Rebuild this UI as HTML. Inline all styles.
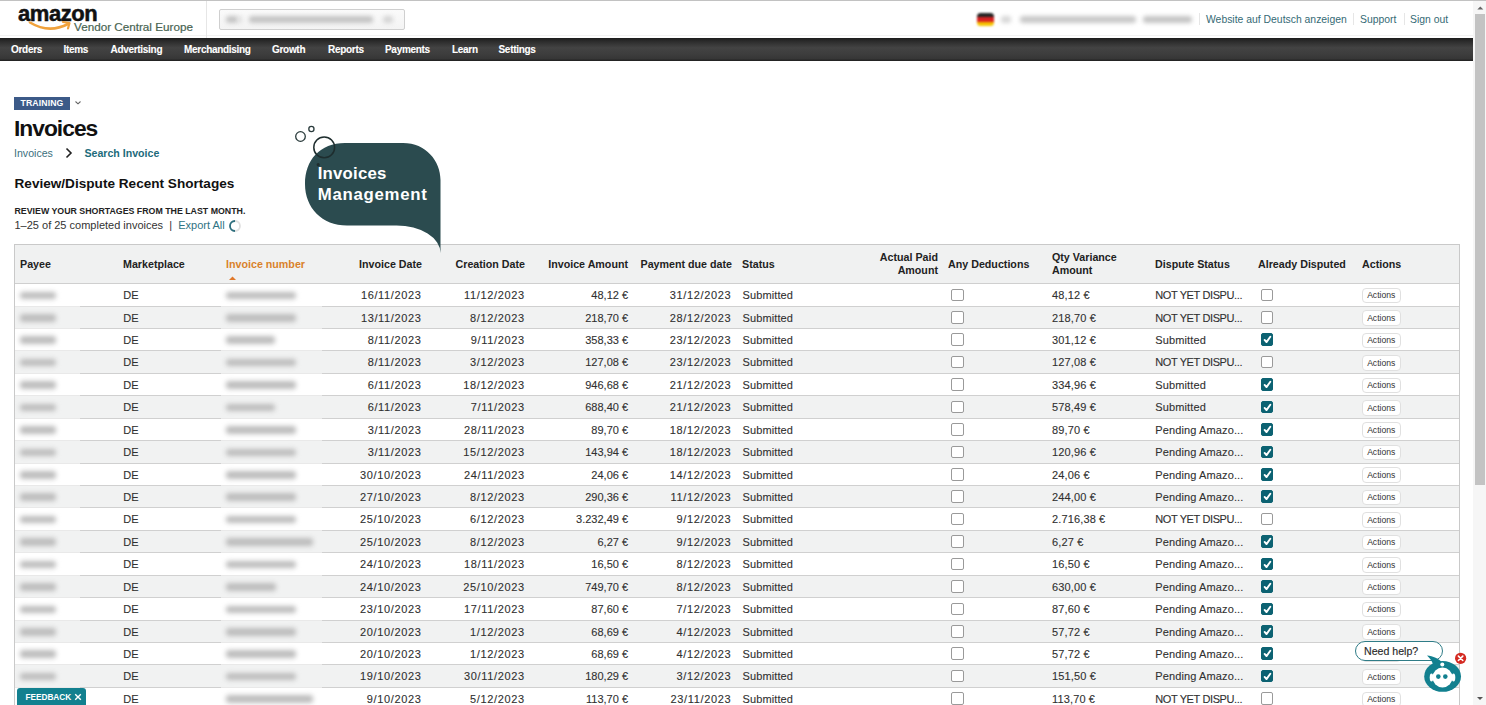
<!DOCTYPE html>
<html><head><meta charset="utf-8"><style>
*{box-sizing:border-box;margin:0;padding:0}
html,body{width:1486px;height:705px;overflow:hidden;background:#fff;font-family:"Liberation Sans",sans-serif;color:#333}
.abs{position:absolute}
#topline{position:absolute;left:0;top:0;width:1486px;height:1px;background:#c2c2c2;z-index:5}
#logo{position:absolute;left:18px;top:0.8px;font-weight:bold;font-size:22px;color:#111;letter-spacing:-0.45px;-webkit-text-stroke:0.5px #111}
#vce{position:absolute;left:74px;top:20px;font-size:11.7px;color:#486452;-webkit-text-stroke:0.2px #486452;white-space:nowrap}
#sep1{position:absolute;left:206px;top:1px;width:1px;height:37px;background:#e6e6e6}
#search{position:absolute;left:219px;top:9px;width:186px;height:20.5px;border:1px solid #cfcfcf;border-radius:2px;background:linear-gradient(#fafafa,#f4f4f4)}
.bt{position:absolute;height:7px;border-radius:3px;background:#c4c4c4;filter:blur(2.3px)}
#nav{position:absolute;left:0;top:38px;width:1473px;height:23px;background:linear-gradient(#1c1c1c 0%,#2c2c2c 15%,#434343 42%,#3d3d3d 70%,#363636 90%,#1e1e1e 100%);}
#nav span{position:absolute;top:6.3px;color:#fff;-webkit-text-stroke:0.1px #fff;font-weight:bold;font-size:10px;letter-spacing:-0.3px;white-space:nowrap}
#links{position:absolute;top:13.5px;font-size:10.4px;color:#356a75;white-space:nowrap}
.vsep{position:absolute;top:13px;width:1px;height:12px;background:#e6e6e6}
#flag{position:absolute;left:977px;top:12.5px;width:16.5px;height:13.5px;border-radius:3.5px;overflow:hidden;filter:blur(0.9px)}
#flag i{display:block;height:4.5px}
#scroll{position:absolute;left:1473px;top:1px;width:13px;height:704px;background:#f6f6f6}
#thumb{position:absolute;left:1475px;top:14px;width:10px;height:471px;background:#c3c3c3}
#train{position:absolute;left:14px;top:97px;width:56px;height:13.4px;background:#3c5a88;color:#fff;font-weight:bold;font-size:8.7px;line-height:13.6px;text-align:center;letter-spacing:0.1px}
#h1{position:absolute;left:14px;top:115px;font-weight:bold;font-size:22.8px;color:#111;letter-spacing:-1.0px}
#bc1{position:absolute;left:14px;top:147.2px;font-size:10.6px;color:#3b6f7d}
#bc2{position:absolute;left:84.5px;top:147.2px;font-size:10.6px;color:#1d6b7b;font-weight:bold}
#h2{position:absolute;left:14.5px;top:175.5px;font-weight:bold;font-size:13.6px;color:#111}
#h3{position:absolute;left:14.5px;top:205.8px;font-weight:bold;font-size:8.8px;color:#222}
#cnt{position:absolute;left:14.5px;top:219px;font-size:11px;color:#333;white-space:nowrap}
#cnt a{color:#2f7383;text-decoration:none}
#tbl{position:absolute;left:14px;top:244px;width:1446px;height:470px;border:1px solid #c9c9c9;background:#fff}
#thead{position:absolute;left:15px;top:245px;width:1444px;height:39px;background:#f0f1f1;border-bottom:1px solid #cfcfcf}
.th{position:absolute;font-weight:bold;font-size:10.7px;color:#222;white-space:nowrap;line-height:13px}
.row{position:absolute;left:15px;width:1444px;height:22.43px;border-bottom:1px solid #d0d0d0}
.row .t{position:absolute;top:5px;font-size:11px;color:#303030;-webkit-text-stroke:0.1px #303030;white-space:nowrap;line-height:13px}
.row .r{width:98px;text-align:right}
.row .l{letter-spacing:0.12px}
.row .dt{letter-spacing:0.65px}
.row .blur{position:absolute;top:7.5px;height:7.5px;background:#bcbcbc;border-radius:3px;filter:blur(2.4px)}
.cb{position:absolute;top:4.5px;width:12.5px;height:12.5px;border:1px solid #9a9a9a;border-radius:2px;background:#fff}
.cb.on{background:#0c6272;border-color:#0c6272}
.cb svg{position:absolute;left:-1px;top:-1px}
.act{position:absolute;top:3.8px;width:39px;height:15.5px;border:1px solid #e0e0e0;padding-top:0.5px;border-radius:4px;background:#fff;font-size:8.6px;line-height:13px;text-align:center;color:#333}
.row .nyd{letter-spacing:-0.38px}
.cov{position:absolute;bottom:-1px;height:1px;background:#e9e9e9}
#hdrline{position:absolute;left:0;top:35px;width:1474px;height:1px;background:#f2f2f2}

</style></head><body>
<div id="topline"></div>
<div id="logo">amazon</div>
<svg class="abs" style="left:27px;top:18px" width="48" height="16" viewBox="0 0 48 16"><path d="M3 4.5 Q22 16 41 6" fill="none" stroke="#f0a23c" stroke-width="2.6" stroke-linecap="round"/><path d="M36 4 L42.5 5 L41 10.5" fill="none" stroke="#f0a23c" stroke-width="2.2" stroke-linecap="round" stroke-linejoin="round"/></svg>
<div id="vce">Vendor Central Europe</div>
<div id="hdrline"></div><div id="sep1"></div>
<div id="search"><div class="bt" style="left:6px;top:5.5px;width:12px"></div><div class="bt" style="left:18px;top:5.5px;width:4px;background:#ddd"></div><div class="bt" style="left:29px;top:5.5px;width:124px"></div><div class="bt" style="left:163px;top:5.5px;width:10px;background:#d4d4d4"></div></div>
<div id="flag"><i style="background:#222"></i><i style="background:#d82020"></i><i style="background:#f5c400"></i></div>
<div class="bt" style="left:1001px;top:16px;width:10px;background:#d6d6d6"></div>
<div class="bt" style="left:1020px;top:16px;width:116px;background:#c8c8c8"></div>
<div class="bt" style="left:1143px;top:16px;width:49px;background:#c4c4c4"></div>
<div class="vsep" style="left:1199px"></div>
<div id="links" style="left:1206px">Website auf Deutsch anzeigen</div>
<div class="vsep" style="left:1353px"></div>
<div id="links" style="left:1360px">Support</div>
<div class="vsep" style="left:1404px"></div>
<div id="links" style="left:1410px">Sign out</div>
<div id="nav">
<span style="left:11px">Orders</span>
<span style="left:63.5px">Items</span>
<span style="left:110.5px">Advertising</span>
<span style="left:184px">Merchandising</span>
<span style="left:272px">Growth</span>
<span style="left:328px">Reports</span>
<span style="left:385px">Payments</span>
<span style="left:452px">Learn</span>
<span style="left:498.5px">Settings</span>
</div>
<div id="scroll"></div><div id="thumb"></div>
<svg class="abs" style="left:1474px;top:2px" width="12" height="12"><path d="M3.3 7.5 L6.3 4.5 L9.3 7.5Z" fill="#666"/></svg>
<svg class="abs" style="left:1474px;top:692px" width="12" height="12"><path d="M3 5 L6 8 L9 5Z" fill="#555"/></svg>

<div id="train">TRAINING</div>
<svg class="abs" style="left:74px;top:100px" width="8" height="6"><path d="M1.5 1.5 L4 3.8 L6.5 1.5" fill="none" stroke="#666" stroke-width="1.1"/></svg>
<div id="h1">Invoices</div>
<div id="bc1">Invoices</div>
<svg class="abs" style="left:64px;top:147px" width="10" height="12"><path d="M2.5 1.5 L7 6 L2.5 10.5" fill="none" stroke="#222" stroke-width="1.6"/></svg>
<div id="bc2">Search Invoice</div>
<div id="h2">Review/Dispute Recent Shortages</div>
<div id="h3">REVIEW YOUR SHORTAGES FROM THE LAST MONTH.</div>
<div id="cnt">1–25 of 25 completed invoices &nbsp;|&nbsp; <a>Export All</a></div>
<svg class="abs" style="left:228px;top:219px" width="14" height="14"><circle cx="7" cy="7" r="5" fill="none" stroke="#e0e0e0" stroke-width="1.8"/><path d="M7 2 A5 5 0 0 0 7 12" fill="none" stroke="#2d6f7e" stroke-width="1.8"/></svg>

<div id="tbl"></div>
<div id="thead">
</div>
<div class="th" style="left:20px;top:258px">Payee</div>
<div class="th" style="left:123px;top:258px">Marketplace</div>
<div class="th" style="left:226px;top:258px;color:#d9822b">Invoice number</div>
<svg class="abs" style="left:228px;top:275px" width="9" height="6"><path d="M1 5 L4.5 1.5 L8 5Z" fill="#e0782a"/></svg>
<div class="th" style="left:323px;top:258px;width:99px;text-align:right">Invoice Date</div>
<div class="th" style="left:427px;top:258px;width:98px;text-align:right">Creation Date</div>
<div class="th" style="left:530px;top:258px;width:98px;text-align:right">Invoice Amount</div>
<div class="th" style="left:633px;top:258px;width:99px;text-align:right">Payment due date</div>
<div class="th" style="left:742px;top:258px">Status</div>
<div class="th" style="left:840px;top:251px;width:98px;text-align:right">Actual Paid<br>Amount</div>
<div class="th" style="left:948px;top:258px">Any Deductions</div>
<div class="th" style="left:1052px;top:251px">Qty Variance<br>Amount</div>
<div class="th" style="left:1155px;top:258px">Dispute Status</div>
<div class="th" style="left:1258px;top:258px">Already Disputed</div>
<div class="th" style="left:1362px;top:258px">Actions</div>
<div class="row" style="top:284.10px;background:#fff"><div class="blur" style="left:5.00px;width:36px"></div><div class="t l" style="left:108.21px">DE</div><div class="blur" style="left:211.42px;width:69.5px"></div><div class="t r dt" style="left:308.63px">16/11/2023</div><div class="t r dt" style="left:411.84px">11/12/2023</div><div class="t r" style="left:515.05px">48,12 €</div><div class="t r dt" style="left:618.26px">31/12/2023</div><div class="t l" style="left:727.47px">Submitted</div><div class="cb" style="left:936.09px"></div><div class="t l" style="left:1037.10px">48,12 €</div><div class="t l nyd" style="left:1140.31px">NOT YET DISPU...</div><div class="cb" style="left:1245.52px"></div><div class="cov" style="left:0;width:65px"></div><div class="cov" style="left:206px;width:101px"></div><div class="act" style="left:1346.73px">Actions</div></div>
<div class="row" style="top:306.53px;background:#f1f2f2"><div class="blur" style="left:5.00px;width:36px"></div><div class="t l" style="left:108.21px">DE</div><div class="blur" style="left:211.42px;width:69.5px"></div><div class="t r dt" style="left:308.63px">13/11/2023</div><div class="t r dt" style="left:411.84px">8/12/2023</div><div class="t r" style="left:515.05px">218,70 €</div><div class="t r dt" style="left:618.26px">28/12/2023</div><div class="t l" style="left:727.47px">Submitted</div><div class="cb" style="left:936.09px"></div><div class="t l" style="left:1037.10px">218,70 €</div><div class="t l nyd" style="left:1140.31px">NOT YET DISPU...</div><div class="cb" style="left:1245.52px"></div><div class="cov" style="left:0;width:65px"></div><div class="cov" style="left:206px;width:101px"></div><div class="act" style="left:1346.73px">Actions</div></div>
<div class="row" style="top:328.96px;background:#fff"><div class="blur" style="left:5.00px;width:36px"></div><div class="t l" style="left:108.21px">DE</div><div class="blur" style="left:211.42px;width:48.5px"></div><div class="t r dt" style="left:308.63px">8/11/2023</div><div class="t r dt" style="left:411.84px">9/11/2023</div><div class="t r" style="left:515.05px">358,33 €</div><div class="t r dt" style="left:618.26px">23/12/2023</div><div class="t l" style="left:727.47px">Submitted</div><div class="cb" style="left:936.09px"></div><div class="t l" style="left:1037.10px">301,12 €</div><div class="t l" style="left:1140.31px">Submitted</div><div class="cb on" style="left:1245.52px"><svg width="13" height="13" viewBox="0 0 13 13"><path d="M3.6 6.9 L5.5 9.1 L9.3 3.8" fill="none" stroke="#fff" stroke-width="1.9" stroke-linecap="round" stroke-linejoin="round"/></svg></div><div class="cov" style="left:0;width:65px"></div><div class="cov" style="left:206px;width:101px"></div><div class="act" style="left:1346.73px">Actions</div></div>
<div class="row" style="top:351.39px;background:#f1f2f2"><div class="blur" style="left:5.00px;width:36px"></div><div class="t l" style="left:108.21px">DE</div><div class="blur" style="left:211.42px;width:69.5px"></div><div class="t r dt" style="left:308.63px">8/11/2023</div><div class="t r dt" style="left:411.84px">3/12/2023</div><div class="t r" style="left:515.05px">127,08 €</div><div class="t r dt" style="left:618.26px">23/12/2023</div><div class="t l" style="left:727.47px">Submitted</div><div class="cb" style="left:936.09px"></div><div class="t l" style="left:1037.10px">127,08 €</div><div class="t l nyd" style="left:1140.31px">NOT YET DISPU...</div><div class="cb" style="left:1245.52px"></div><div class="cov" style="left:0;width:65px"></div><div class="cov" style="left:206px;width:101px"></div><div class="act" style="left:1346.73px">Actions</div></div>
<div class="row" style="top:373.82px;background:#fff"><div class="blur" style="left:5.00px;width:36px"></div><div class="t l" style="left:108.21px">DE</div><div class="blur" style="left:211.42px;width:69.5px"></div><div class="t r dt" style="left:308.63px">6/11/2023</div><div class="t r dt" style="left:411.84px">18/12/2023</div><div class="t r" style="left:515.05px">946,68 €</div><div class="t r dt" style="left:618.26px">21/12/2023</div><div class="t l" style="left:727.47px">Submitted</div><div class="cb" style="left:936.09px"></div><div class="t l" style="left:1037.10px">334,96 €</div><div class="t l" style="left:1140.31px">Submitted</div><div class="cb on" style="left:1245.52px"><svg width="13" height="13" viewBox="0 0 13 13"><path d="M3.6 6.9 L5.5 9.1 L9.3 3.8" fill="none" stroke="#fff" stroke-width="1.9" stroke-linecap="round" stroke-linejoin="round"/></svg></div><div class="cov" style="left:0;width:65px"></div><div class="cov" style="left:206px;width:101px"></div><div class="act" style="left:1346.73px">Actions</div></div>
<div class="row" style="top:396.25px;background:#f1f2f2"><div class="blur" style="left:5.00px;width:36px"></div><div class="t l" style="left:108.21px">DE</div><div class="blur" style="left:211.42px;width:48.5px"></div><div class="t r dt" style="left:308.63px">6/11/2023</div><div class="t r dt" style="left:411.84px">7/11/2023</div><div class="t r" style="left:515.05px">688,40 €</div><div class="t r dt" style="left:618.26px">21/12/2023</div><div class="t l" style="left:727.47px">Submitted</div><div class="cb" style="left:936.09px"></div><div class="t l" style="left:1037.10px">578,49 €</div><div class="t l" style="left:1140.31px">Submitted</div><div class="cb on" style="left:1245.52px"><svg width="13" height="13" viewBox="0 0 13 13"><path d="M3.6 6.9 L5.5 9.1 L9.3 3.8" fill="none" stroke="#fff" stroke-width="1.9" stroke-linecap="round" stroke-linejoin="round"/></svg></div><div class="cov" style="left:0;width:65px"></div><div class="cov" style="left:206px;width:101px"></div><div class="act" style="left:1346.73px">Actions</div></div>
<div class="row" style="top:418.68px;background:#fff"><div class="blur" style="left:5.00px;width:36px"></div><div class="t l" style="left:108.21px">DE</div><div class="blur" style="left:211.42px;width:69.5px"></div><div class="t r dt" style="left:308.63px">3/11/2023</div><div class="t r dt" style="left:411.84px">28/11/2023</div><div class="t r" style="left:515.05px">89,70 €</div><div class="t r dt" style="left:618.26px">18/12/2023</div><div class="t l" style="left:727.47px">Submitted</div><div class="cb" style="left:936.09px"></div><div class="t l" style="left:1037.10px">89,70 €</div><div class="t l" style="left:1140.31px">Pending Amazo...</div><div class="cb on" style="left:1245.52px"><svg width="13" height="13" viewBox="0 0 13 13"><path d="M3.6 6.9 L5.5 9.1 L9.3 3.8" fill="none" stroke="#fff" stroke-width="1.9" stroke-linecap="round" stroke-linejoin="round"/></svg></div><div class="cov" style="left:0;width:65px"></div><div class="cov" style="left:206px;width:101px"></div><div class="act" style="left:1346.73px">Actions</div></div>
<div class="row" style="top:441.11px;background:#f1f2f2"><div class="blur" style="left:5.00px;width:36px"></div><div class="t l" style="left:108.21px">DE</div><div class="blur" style="left:211.42px;width:69.5px"></div><div class="t r dt" style="left:308.63px">3/11/2023</div><div class="t r dt" style="left:411.84px">15/12/2023</div><div class="t r" style="left:515.05px">143,94 €</div><div class="t r dt" style="left:618.26px">18/12/2023</div><div class="t l" style="left:727.47px">Submitted</div><div class="cb" style="left:936.09px"></div><div class="t l" style="left:1037.10px">120,96 €</div><div class="t l" style="left:1140.31px">Pending Amazo...</div><div class="cb on" style="left:1245.52px"><svg width="13" height="13" viewBox="0 0 13 13"><path d="M3.6 6.9 L5.5 9.1 L9.3 3.8" fill="none" stroke="#fff" stroke-width="1.9" stroke-linecap="round" stroke-linejoin="round"/></svg></div><div class="cov" style="left:0;width:65px"></div><div class="cov" style="left:206px;width:101px"></div><div class="act" style="left:1346.73px">Actions</div></div>
<div class="row" style="top:463.54px;background:#fff"><div class="blur" style="left:5.00px;width:36px"></div><div class="t l" style="left:108.21px">DE</div><div class="blur" style="left:211.42px;width:69.5px"></div><div class="t r dt" style="left:308.63px">30/10/2023</div><div class="t r dt" style="left:411.84px">24/11/2023</div><div class="t r" style="left:515.05px">24,06 €</div><div class="t r dt" style="left:618.26px">14/12/2023</div><div class="t l" style="left:727.47px">Submitted</div><div class="cb" style="left:936.09px"></div><div class="t l" style="left:1037.10px">24,06 €</div><div class="t l" style="left:1140.31px">Pending Amazo...</div><div class="cb on" style="left:1245.52px"><svg width="13" height="13" viewBox="0 0 13 13"><path d="M3.6 6.9 L5.5 9.1 L9.3 3.8" fill="none" stroke="#fff" stroke-width="1.9" stroke-linecap="round" stroke-linejoin="round"/></svg></div><div class="cov" style="left:0;width:65px"></div><div class="cov" style="left:206px;width:101px"></div><div class="act" style="left:1346.73px">Actions</div></div>
<div class="row" style="top:485.97px;background:#f1f2f2"><div class="blur" style="left:5.00px;width:36px"></div><div class="t l" style="left:108.21px">DE</div><div class="blur" style="left:211.42px;width:69.5px"></div><div class="t r dt" style="left:308.63px">27/10/2023</div><div class="t r dt" style="left:411.84px">8/12/2023</div><div class="t r" style="left:515.05px">290,36 €</div><div class="t r dt" style="left:618.26px">11/12/2023</div><div class="t l" style="left:727.47px">Submitted</div><div class="cb" style="left:936.09px"></div><div class="t l" style="left:1037.10px">244,00 €</div><div class="t l" style="left:1140.31px">Pending Amazo...</div><div class="cb on" style="left:1245.52px"><svg width="13" height="13" viewBox="0 0 13 13"><path d="M3.6 6.9 L5.5 9.1 L9.3 3.8" fill="none" stroke="#fff" stroke-width="1.9" stroke-linecap="round" stroke-linejoin="round"/></svg></div><div class="cov" style="left:0;width:65px"></div><div class="cov" style="left:206px;width:101px"></div><div class="act" style="left:1346.73px">Actions</div></div>
<div class="row" style="top:508.40px;background:#fff"><div class="blur" style="left:5.00px;width:36px"></div><div class="t l" style="left:108.21px">DE</div><div class="blur" style="left:211.42px;width:69.5px"></div><div class="t r dt" style="left:308.63px">25/10/2023</div><div class="t r dt" style="left:411.84px">6/12/2023</div><div class="t r" style="left:515.05px">3.232,49 €</div><div class="t r dt" style="left:618.26px">9/12/2023</div><div class="t l" style="left:727.47px">Submitted</div><div class="cb" style="left:936.09px"></div><div class="t l" style="left:1037.10px">2.716,38 €</div><div class="t l nyd" style="left:1140.31px">NOT YET DISPU...</div><div class="cb" style="left:1245.52px"></div><div class="cov" style="left:0;width:65px"></div><div class="cov" style="left:206px;width:101px"></div><div class="act" style="left:1346.73px">Actions</div></div>
<div class="row" style="top:530.83px;background:#f1f2f2"><div class="blur" style="left:5.00px;width:36px"></div><div class="t l" style="left:108.21px">DE</div><div class="blur" style="left:211.42px;width:86.5px"></div><div class="t r dt" style="left:308.63px">25/10/2023</div><div class="t r dt" style="left:411.84px">8/12/2023</div><div class="t r" style="left:515.05px">6,27 €</div><div class="t r dt" style="left:618.26px">9/12/2023</div><div class="t l" style="left:727.47px">Submitted</div><div class="cb" style="left:936.09px"></div><div class="t l" style="left:1037.10px">6,27 €</div><div class="t l" style="left:1140.31px">Pending Amazo...</div><div class="cb on" style="left:1245.52px"><svg width="13" height="13" viewBox="0 0 13 13"><path d="M3.6 6.9 L5.5 9.1 L9.3 3.8" fill="none" stroke="#fff" stroke-width="1.9" stroke-linecap="round" stroke-linejoin="round"/></svg></div><div class="cov" style="left:0;width:65px"></div><div class="cov" style="left:206px;width:101px"></div><div class="act" style="left:1346.73px">Actions</div></div>
<div class="row" style="top:553.26px;background:#fff"><div class="blur" style="left:5.00px;width:36px"></div><div class="t l" style="left:108.21px">DE</div><div class="blur" style="left:211.42px;width:69.5px"></div><div class="t r dt" style="left:308.63px">24/10/2023</div><div class="t r dt" style="left:411.84px">18/11/2023</div><div class="t r" style="left:515.05px">16,50 €</div><div class="t r dt" style="left:618.26px">8/12/2023</div><div class="t l" style="left:727.47px">Submitted</div><div class="cb" style="left:936.09px"></div><div class="t l" style="left:1037.10px">16,50 €</div><div class="t l" style="left:1140.31px">Pending Amazo...</div><div class="cb on" style="left:1245.52px"><svg width="13" height="13" viewBox="0 0 13 13"><path d="M3.6 6.9 L5.5 9.1 L9.3 3.8" fill="none" stroke="#fff" stroke-width="1.9" stroke-linecap="round" stroke-linejoin="round"/></svg></div><div class="cov" style="left:0;width:65px"></div><div class="cov" style="left:206px;width:101px"></div><div class="act" style="left:1346.73px">Actions</div></div>
<div class="row" style="top:575.69px;background:#f1f2f2"><div class="blur" style="left:5.00px;width:36px"></div><div class="t l" style="left:108.21px">DE</div><div class="blur" style="left:211.42px;width:49.5px"></div><div class="t r dt" style="left:308.63px">24/10/2023</div><div class="t r dt" style="left:411.84px">25/10/2023</div><div class="t r" style="left:515.05px">749,70 €</div><div class="t r dt" style="left:618.26px">8/12/2023</div><div class="t l" style="left:727.47px">Submitted</div><div class="cb" style="left:936.09px"></div><div class="t l" style="left:1037.10px">630,00 €</div><div class="t l" style="left:1140.31px">Pending Amazo...</div><div class="cb on" style="left:1245.52px"><svg width="13" height="13" viewBox="0 0 13 13"><path d="M3.6 6.9 L5.5 9.1 L9.3 3.8" fill="none" stroke="#fff" stroke-width="1.9" stroke-linecap="round" stroke-linejoin="round"/></svg></div><div class="cov" style="left:0;width:65px"></div><div class="cov" style="left:206px;width:101px"></div><div class="act" style="left:1346.73px">Actions</div></div>
<div class="row" style="top:598.12px;background:#fff"><div class="blur" style="left:5.00px;width:36px"></div><div class="t l" style="left:108.21px">DE</div><div class="blur" style="left:211.42px;width:69.5px"></div><div class="t r dt" style="left:308.63px">23/10/2023</div><div class="t r dt" style="left:411.84px">17/11/2023</div><div class="t r" style="left:515.05px">87,60 €</div><div class="t r dt" style="left:618.26px">7/12/2023</div><div class="t l" style="left:727.47px">Submitted</div><div class="cb" style="left:936.09px"></div><div class="t l" style="left:1037.10px">87,60 €</div><div class="t l" style="left:1140.31px">Pending Amazo...</div><div class="cb on" style="left:1245.52px"><svg width="13" height="13" viewBox="0 0 13 13"><path d="M3.6 6.9 L5.5 9.1 L9.3 3.8" fill="none" stroke="#fff" stroke-width="1.9" stroke-linecap="round" stroke-linejoin="round"/></svg></div><div class="cov" style="left:0;width:65px"></div><div class="cov" style="left:206px;width:101px"></div><div class="act" style="left:1346.73px">Actions</div></div>
<div class="row" style="top:620.55px;background:#f1f2f2"><div class="blur" style="left:5.00px;width:36px"></div><div class="t l" style="left:108.21px">DE</div><div class="blur" style="left:211.42px;width:69.5px"></div><div class="t r dt" style="left:308.63px">20/10/2023</div><div class="t r dt" style="left:411.84px">1/12/2023</div><div class="t r" style="left:515.05px">68,69 €</div><div class="t r dt" style="left:618.26px">4/12/2023</div><div class="t l" style="left:727.47px">Submitted</div><div class="cb" style="left:936.09px"></div><div class="t l" style="left:1037.10px">57,72 €</div><div class="t l" style="left:1140.31px">Pending Amazo...</div><div class="cb on" style="left:1245.52px"><svg width="13" height="13" viewBox="0 0 13 13"><path d="M3.6 6.9 L5.5 9.1 L9.3 3.8" fill="none" stroke="#fff" stroke-width="1.9" stroke-linecap="round" stroke-linejoin="round"/></svg></div><div class="cov" style="left:0;width:65px"></div><div class="cov" style="left:206px;width:101px"></div><div class="act" style="left:1346.73px">Actions</div></div>
<div class="row" style="top:642.98px;background:#fff"><div class="blur" style="left:5.00px;width:36px"></div><div class="t l" style="left:108.21px">DE</div><div class="blur" style="left:211.42px;width:69.5px"></div><div class="t r dt" style="left:308.63px">20/10/2023</div><div class="t r dt" style="left:411.84px">1/12/2023</div><div class="t r" style="left:515.05px">68,69 €</div><div class="t r dt" style="left:618.26px">4/12/2023</div><div class="t l" style="left:727.47px">Submitted</div><div class="cb" style="left:936.09px"></div><div class="t l" style="left:1037.10px">57,72 €</div><div class="t l" style="left:1140.31px">Pending Amazo...</div><div class="cb on" style="left:1245.52px"><svg width="13" height="13" viewBox="0 0 13 13"><path d="M3.6 6.9 L5.5 9.1 L9.3 3.8" fill="none" stroke="#fff" stroke-width="1.9" stroke-linecap="round" stroke-linejoin="round"/></svg></div><div class="cov" style="left:0;width:65px"></div><div class="cov" style="left:206px;width:101px"></div><div class="act" style="left:1346.73px">Actions</div></div>
<div class="row" style="top:665.41px;background:#f1f2f2"><div class="blur" style="left:5.00px;width:36px"></div><div class="t l" style="left:108.21px">DE</div><div class="blur" style="left:211.42px;width:69.5px"></div><div class="t r dt" style="left:308.63px">19/10/2023</div><div class="t r dt" style="left:411.84px">30/11/2023</div><div class="t r" style="left:515.05px">180,29 €</div><div class="t r dt" style="left:618.26px">3/12/2023</div><div class="t l" style="left:727.47px">Submitted</div><div class="cb" style="left:936.09px"></div><div class="t l" style="left:1037.10px">151,50 €</div><div class="t l" style="left:1140.31px">Pending Amazo...</div><div class="cb on" style="left:1245.52px"><svg width="13" height="13" viewBox="0 0 13 13"><path d="M3.6 6.9 L5.5 9.1 L9.3 3.8" fill="none" stroke="#fff" stroke-width="1.9" stroke-linecap="round" stroke-linejoin="round"/></svg></div><div class="cov" style="left:0;width:65px"></div><div class="cov" style="left:206px;width:101px"></div><div class="act" style="left:1346.73px">Actions</div></div>
<div class="row" style="top:687.84px;background:#fff"><div class="blur" style="left:5.00px;width:36px"></div><div class="t l" style="left:108.21px">DE</div><div class="blur" style="left:211.42px;width:86.5px"></div><div class="t r dt" style="left:308.63px">9/10/2023</div><div class="t r dt" style="left:411.84px">5/12/2023</div><div class="t r" style="left:515.05px">113,70 €</div><div class="t r dt" style="left:618.26px">23/11/2023</div><div class="t l" style="left:727.47px">Submitted</div><div class="cb" style="left:936.09px"></div><div class="t l" style="left:1037.10px">113,70 €</div><div class="t l nyd" style="left:1140.31px">NOT YET DISPU...</div><div class="cb" style="left:1245.52px"></div><div class="cov" style="left:0;width:65px"></div><div class="cov" style="left:206px;width:101px"></div><div class="act" style="left:1346.73px">Actions</div></div>

<svg class="abs" style="left:290px;top:118px" width="160" height="140" viewBox="290 118 160 140">
<path d="M305 184 C305 160 320 143 345 143 L403 143 C426 143 440.5 161 440.5 180 L440.5 253 A 44 27.5 0 0 0 396.5 225.5 L347 225.5 C322 225.5 305 208 305 184 Z" fill="#2b4b4f"/>
<circle cx="311.4" cy="129" r="2.6" fill="none" stroke="#2a3b3c" stroke-width="1.3"/>
<circle cx="300.5" cy="136.5" r="4.8" fill="none" stroke="#2a3b3c" stroke-width="1.3"/>
<circle cx="324.2" cy="147.4" r="10.4" fill="none" stroke="#1e2d2e" stroke-width="1.5"/>
<circle cx="318.2" cy="164.7" r="1.6" fill="#1e2d2e"/>
</svg>
<div class="abs" style="left:317.7px;top:164px;font-weight:bold;font-size:16.8px;line-height:20.5px;color:#fff;letter-spacing:0.22px">Invoices<br><span style="letter-spacing:0.72px">Management</span></div>

<div class="abs" style="left:1355px;top:640.5px;width:88px;height:20.5px;border:1.5px solid #2f7c87;border-radius:10px;background:#fff"></div>
<div class="abs" style="left:1364px;top:644.6px;font-size:10.6px;color:#2a2a2a;-webkit-text-stroke:0.15px #2a2a2a;white-space:nowrap">Need help?</div>
<svg class="abs" style="left:1415px;top:650px" width="60" height="55" viewBox="1415 650 60 55">
<path d="M1427 655.5 C1433 656 1439 658.5 1442 662.5 L1434 670 C1434 664 1431 659 1427 655.5 Z" fill="#12808f"/>
<ellipse cx="1442.6" cy="676.4" rx="18.4" ry="15.4" fill="#12808f"/>
<circle cx="1442.5" cy="677.5" r="10" fill="#fff"/>
<ellipse cx="1431.5" cy="677.5" rx="1.8" ry="4" fill="#fff"/>
<ellipse cx="1453.5" cy="677.5" rx="1.8" ry="4" fill="#fff"/>
<circle cx="1442.3" cy="664.6" r="2" fill="#fff"/>
<circle cx="1438.3" cy="676.6" r="2.3" fill="#12808f"/>
<circle cx="1445.3" cy="676.6" r="2.3" fill="#12808f"/>
<circle cx="1460.6" cy="658.3" r="5.6" fill="#d42a22"/>
<path d="M1458.4 656.1 L1462.8 660.5 M1462.8 656.1 L1458.4 660.5" stroke="#fff" stroke-width="1.6" stroke-linecap="round"/>
</svg>

<div class="abs" style="left:16.5px;top:688px;width:69px;height:20px;background:#12808f;border-radius:3px 3px 0 0"></div>
<div class="abs" style="left:25.5px;top:692.3px;font-weight:bold;font-size:8.3px;color:#fff;white-space:nowrap;letter-spacing:-0.05px">FEEDBACK</div>
<svg class="abs" style="left:73px;top:692px" width="10" height="10"><path d="M2.2 2.2 L7.8 7.8 M7.8 2.2 L2.2 7.8" stroke="#fff" stroke-width="1.4"/></svg>


</body></html>
